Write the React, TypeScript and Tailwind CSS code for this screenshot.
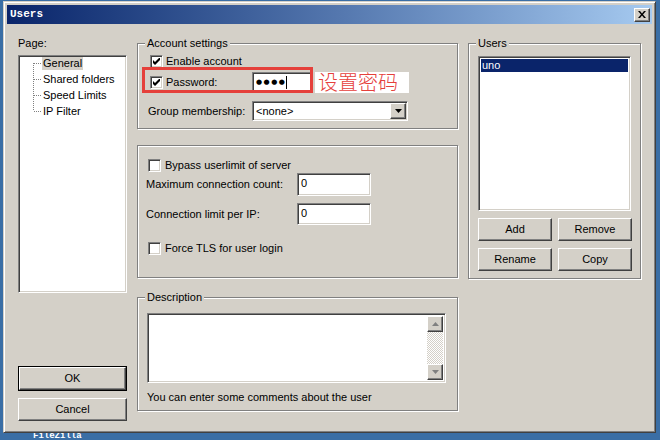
import { useState } from "react";

const sunken =
  "border border-[#808080] border-r-white border-b-white shadow-[inset_1px_1px_0_#404040,inset_-1px_-1px_0_#d4d0c8]";
const raised =
  "border border-white border-r-[#404040] border-b-[#404040] shadow-[inset_-1px_-1px_0_#808080]";
const etched = "border border-[#808080] shadow-[inset_1px_1px_0_#fff,1px_1px_0_#fff]";

function Checkbox({ checked }: { checked?: boolean }) {
  return (
    <div className={`w-[13px] h-[13px] shrink-0 bg-white flex items-center justify-center ${sunken}`}>
      {checked && (
        <svg width="7" height="7" viewBox="0 0 7 7">
          <path d="M0 2 L2 4 L7 -1 L7 2 L2 7 L0 5 Z" fill="#000" />
        </svg>
      )}
    </div>
  );
}

function Button({ label, className = "" }: { label: string; className?: string }) {
  return (
    <div className={`h-[23px] flex items-center justify-center bg-[#d4d0c8] ${raised} ${className}`}>
      {label}
    </div>
  );
}

function GroupBox({
  title,
  className = "",
  children,
}: {
  title?: string;
  className?: string;
  children: React.ReactNode;
}) {
  return (
    <div className={`relative ${etched} ${className}`}>
      {title && (
        <span className="absolute -top-[7px] left-[7px] px-[2px] bg-[#d4d0c8] leading-[13px]">{title}</span>
      )}
      {children}
    </div>
  );
}

function TreeLine({ first, last }: { first?: boolean; last?: boolean }) {
  return (
    <svg width="22" height="16" className="shrink-0">
      <line x1="13.5" y1={first ? 6 : 0} x2="13.5" y2={last ? 6 : 16} stroke="#808080" strokeDasharray="1 1" />
      <line x1="14" y1="6.5" x2="22" y2="6.5" stroke="#808080" strokeDasharray="1 1" />
    </svg>
  );
}

const pages = ["General", "Shared folders", "Speed Limits", "IP Filter"];

export default function App() {
  const [page] = useState("General");

  return (
    <div className="w-[660px] h-[440px] bg-[#3a6ea5] overflow-hidden relative font-['Liberation_Sans',sans-serif] text-[11px] text-black">
      {/* desktop label below the window */}
      <div className="absolute left-[33px] top-[433px] text-white font-bold font-['Liberation_Mono',monospace] text-[9px] leading-[7px]">
        FileZilla
      </div>

      {/* Window */}
      <div className="relative ml-[3px] mt-[1px] w-[653px] h-[432px] bg-[#d4d0c8] border border-[#d4d0c8] border-r-[#404040] border-b-[#404040] shadow-[inset_1px_1px_0_#fff,inset_-1px_-1px_0_#808080] p-[3px] flex flex-col">
        {/* Title bar */}
        <div className="h-[19px] shrink-0 bg-gradient-to-r from-[#0a246a] to-[#a6caf0] flex items-center justify-between pl-[3px] pr-[2px]">
          <span className="text-white font-bold font-['Liberation_Mono',monospace] text-[11px] leading-none">Users</span>
          <div className={`w-[16px] h-[14px] bg-[#d4d0c8] flex items-center justify-center ${raised}`}>
            <svg width="8" height="7" viewBox="0 0 8 7">
              <path d="M0 0 H2 L4 2.5 L6 0 H8 L5 3.5 L8 7 H6 L4 4.5 L2 7 H0 L3 3.5 Z" fill="#000" />
            </svg>
          </div>
        </div>

        {/* Body */}
        <div className="flex pl-[11px] pt-[13px]">
          {/* Left column */}
          <div className="w-[109px] flex flex-col">
            <div className="leading-[13px] h-[13px]">Page:</div>
            <div className={`mt-[5px] h-[238px] bg-white ${sunken}`}>
              <div className="pt-[1px]">
                {pages.map((p, i) => (
                  <div key={p} className="h-[16px] flex items-start pl-[1px]">
                    <TreeLine first={i === 0} last={i === pages.length - 1} />
                    <span
                      className={`leading-[13px] h-[13px] px-[1px] whitespace-nowrap ${
                        p === page ? "bg-[#d4d0c8]" : ""
                      }`}
                    >
                      {p}
                    </span>
                  </div>
                ))}
              </div>
            </div>
            <div className="mt-[73px] border border-black">
              <Button label="OK" className="h-[21px]" />
            </div>
            <Button label="Cancel" className="mt-[7px]" />
          </div>

          {/* Middle column */}
          <div className="w-[321px] ml-[10px] flex flex-col">
            <GroupBox title="Account settings" className="mt-[6px] h-[86px]">
              {/* annotation frame */}
              <div className="absolute left-[4px] top-[23px] w-[171px] h-[26px] border-[3px] border-[#e5403b]" />
              <div className="pt-[11px] pl-[12px] flex items-center h-[24px] gap-[3px]">
                <Checkbox checked />
                <span className="leading-[13px]">Enable account</span>
              </div>
              <div className="mt-[3px] pl-[12px] flex items-center h-[22px]">
                <Checkbox checked />
                <span className="ml-[3px] w-[86px] leading-[13px]">Password:</span>
                <div className={`w-[61px] h-[21px] bg-white flex items-center pl-[3px] ${sunken}`}>
                  <span className="font-['DejaVu_Sans',sans-serif] text-[7px] tracking-[1.5px] leading-none">●●●●</span>
                  <span className="w-[1px] h-[13px] bg-black" />
                </div>
                <div className="ml-[2px] w-[94px] h-[21px] bg-white flex items-center pl-[3px]">
                  <span className="text-[#e5403b] text-[20px] leading-none font-['Noto_Sans_CJK_SC',sans-serif] font-light">
                    设置密码
                  </span>
                </div>
              </div>
              <div className="mt-[8px] pl-[10px] flex items-center h-[20px]">
                <span className="w-[104px] leading-[13px]">Group membership:</span>
                <div className={`w-[156px] h-[20px] bg-white flex items-center justify-between pl-[3px] pr-[1px] ${sunken}`}>
                  <span className="leading-[13px]">&lt;none&gt;</span>
                  <div className={`w-[16px] h-[16px] bg-[#d4d0c8] flex items-center justify-center ${raised}`}>
                    <svg width="7" height="4" viewBox="0 0 7 4">
                      <path d="M0 0 H7 L3.5 4 Z" fill="#000" />
                    </svg>
                  </div>
                </div>
              </div>
            </GroupBox>

            <GroupBox className="mt-[16px] h-[133px]">
              <div className="pt-[13px] pl-[10px] flex items-center gap-[4px]">
                <Checkbox />
                <span className="leading-[13px]">Bypass userlimit of server</span>
              </div>
              <div className="mt-[1px] pl-[8px] flex items-center">
                <span className="w-[151px] leading-[13px]">Maximum connection count:</span>
                <div className={`w-[74px] h-[23px] bg-white pl-[3px] pt-[3px] leading-[13px] ${sunken}`}>0</div>
              </div>
              <div className="mt-[7px] pl-[8px] flex items-center">
                <span className="w-[151px] leading-[13px]">Connection limit per IP:</span>
                <div className={`w-[74px] h-[22px] bg-white pl-[3px] pt-[3px] leading-[13px] ${sunken}`}>0</div>
              </div>
              <div className="mt-[17px] pl-[10px] flex items-center gap-[4px]">
                <Checkbox />
                <span className="leading-[13px]">Force TLS for user login</span>
              </div>
            </GroupBox>

            <GroupBox title="Description" className="mt-[19px] h-[114px]">
              <div className="pt-[15px] pl-[9px]">
                <div className={`w-[299px] h-[70px] bg-white flex justify-end p-[2px] ${sunken}`}>
                  <div className="w-[16px] h-full flex flex-col bg-[repeating-conic-gradient(#d4d0c8_0_25%,#fff_0_50%)] bg-[length:2px_2px]">
                    <div className={`w-[16px] h-[16px] bg-[#d4d0c8] flex items-center justify-center ${raised}`}>
                      <svg width="7" height="4" viewBox="0 0 7 4">
                        <path d="M0 4 H7 L3.5 0 Z" fill="#808080" />
                      </svg>
                    </div>
                    <div className="flex-1" />
                    <div className={`w-[16px] h-[16px] bg-[#d4d0c8] flex items-center justify-center ${raised}`}>
                      <svg width="7" height="4" viewBox="0 0 7 4">
                        <path d="M0 0 H7 L3.5 4 Z" fill="#808080" />
                      </svg>
                    </div>
                  </div>
                </div>
                <div className="mt-[8px] leading-[13px]">You can enter some comments about the user</div>
              </div>
            </GroupBox>
          </div>

          {/* Right column */}
          <div className="w-[173px] ml-[10px]">
            <GroupBox title="Users" className="mt-[6px] h-[236px]">
              <div className="pt-[12px] pl-[9px]">
                <div className={`w-[153px] h-[155px] bg-white p-[2px] ${sunken}`}>
                  <div className="h-[13px] bg-[#0a246a] text-white leading-[13px] pl-[1px]">uno</div>
                </div>
                <div className="mt-[7px] flex gap-[6px]">
                  <Button label="Add" className="w-[74px]" />
                  <Button label="Remove" className="w-[74px]" />
                </div>
                <div className="mt-[7px] flex gap-[6px]">
                  <Button label="Rename" className="w-[74px]" />
                  <Button label="Copy" className="w-[74px]" />
                </div>
              </div>
            </GroupBox>
          </div>
        </div>
      </div>
    </div>
  );
}
